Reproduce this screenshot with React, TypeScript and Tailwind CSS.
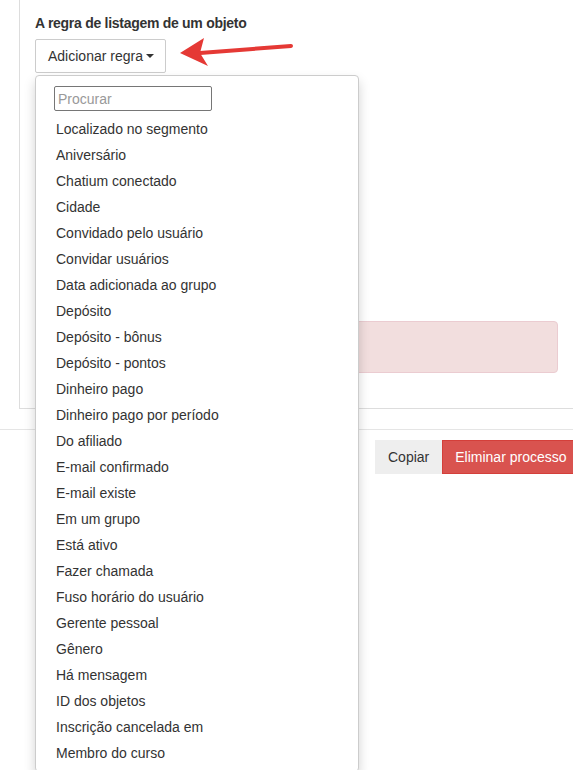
import React from 'react';

const rules: string[] = [
  'Localizado no segmento',
  'Aniversário',
  'Chatium conectado',
  'Cidade',
  'Convidado pelo usuário',
  'Convidar usuários',
  'Data adicionada ao grupo',
  'Depósito',
  'Depósito - bônus',
  'Depósito - pontos',
  'Dinheiro pago',
  'Dinheiro pago por período',
  'Do afiliado',
  'E-mail confirmado',
  'E-mail existe',
  'Em um grupo',
  'Está ativo',
  'Fazer chamada',
  'Fuso horário do usuário',
  'Gerente pessoal',
  'Gênero',
  'Há mensagem',
  'ID dos objetos',
  'Inscrição cancelada em',
  'Membro do curso',
];

function App() {
  return (
    <div
      className="relative w-[573px] h-[770px] overflow-hidden bg-white text-[#333] text-sm"
      style={{ fontFamily: '"Liberation Sans", Arial, sans-serif' }}
    >
      {/* process panel */}
      <div className="ml-[19px] border-l border-b border-[#ddd] pl-[15px] pr-[15px] pt-3 pb-[35px]">
        <div className="font-bold leading-5 pt-px tracking-[-0.28px]">A regra de listagem de um objeto</div>
        <button className="mt-[6px] h-[34px] pl-3 pr-[11px] border border-[#ccc] rounded-[2px] bg-white flex items-center leading-5">
          Adicionar regra
          <span className="ml-[3px] inline-block w-0 h-0 border-t-[4px] border-t-[#333] border-x-[4px] border-x-transparent" />
        </button>
        <div className="h-[248px]" />
        <div className="h-[52px] rounded border border-[#ebccd1] bg-[#f2dede]" />
      </div>

      {/* footer */}
      <div className="mt-5 border-t border-[#e5e5e5] pt-[10px] flex whitespace-nowrap">
        <div className="ml-[375px] flex">
          <button className="h-[34px] px-3 bg-[#eee] border border-[#eee] text-[#333] leading-5">Copiar</button>
          <button className="h-[34px] px-3 bg-[#d9534f] border border-[#d43f3a] text-white leading-5">
            Eliminar processo
          </button>
        </div>
      </div>

      {/* dropdown menu */}
      <div className="absolute left-[35px] top-[75px] w-[324px] bg-white border border-[#ccc] rounded py-[5px] shadow-[0_6px_12px_rgba(0,0,0,0.175)]">
        <div className="px-[18px] py-[5px]">
          <input
            placeholder="Procurar"
            className="w-[158px] h-[25px] px-[3px] border border-[#767676] rounded-[2px] text-sm text-[#333] placeholder:text-[#999] outline-none"
            style={{ fontFamily: '"Liberation Sans", Arial, sans-serif' }}
          />
        </div>
        {rules.map((r) => (
          <div key={r} className="px-5 py-[3px] leading-5 whitespace-nowrap">
            {r}
          </div>
        ))}
      </div>

      {/* red annotation arrow */}
      <svg className="absolute left-0 top-0 pointer-events-none" width="573" height="100">
        <line x1="291" y1="46" x2="200" y2="53" stroke="#e53935" strokeWidth="4" strokeLinecap="round" />
        <polygon points="180,53 204,38 200,53 208,66" fill="#e53935" />
      </svg>
    </div>
  );
}

export default App;
